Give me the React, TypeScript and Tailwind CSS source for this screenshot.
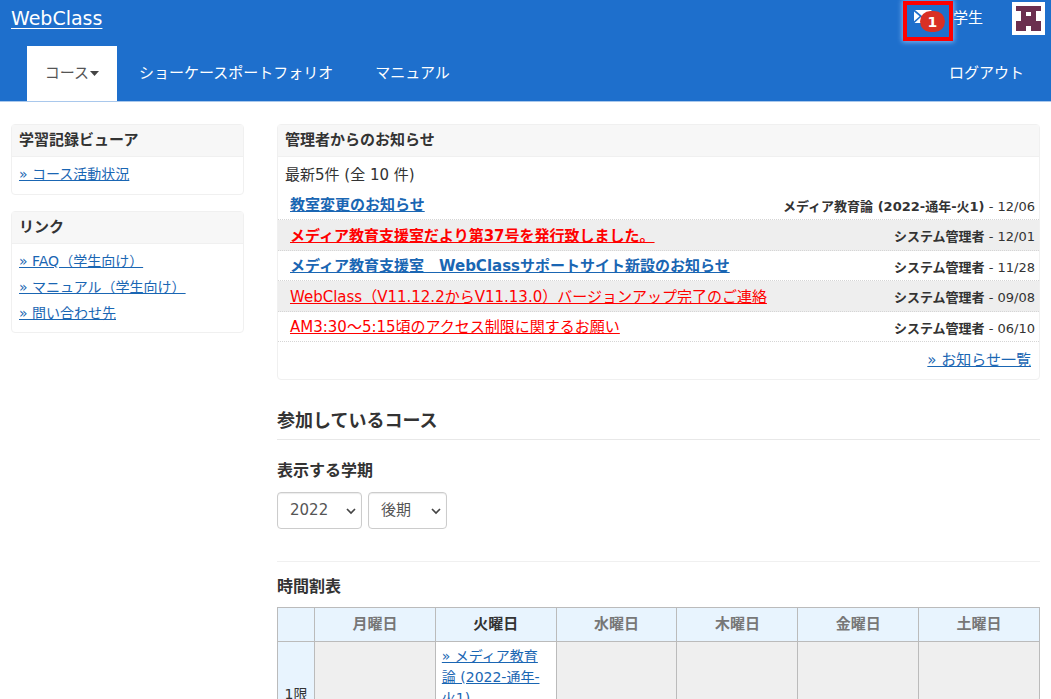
const sideLinks = ["FAQ（学生向け）", "マニュアル（学生向け）", "問い合わせ先"];

const notices = [
  { title: "教室変更のお知らせ", from: "メディア教育論 (2022-通年-火1)", date: "12/06", style: "font-bold text-[#1a66b3]" },
  { title: "メディア教育支援室だより第37号を発行致しました。", from: "システム管理者", date: "12/01", style: "font-bold text-[#ff0000]" },
  { title: "メディア教育支援室　WebClassサポートサイト新設のお知らせ", from: "システム管理者", date: "11/28", style: "font-bold text-[#1a66b3]" },
  { title: "WebClass（V11.12.2からV11.13.0）バージョンアップ完了のご連絡", from: "システム管理者", date: "09/08", style: "text-[#ff0000]" },
  { title: "AM3:30～5:15頃のアクセス制限に関するお願い", from: "システム管理者", date: "06/10", style: "text-[#ff0000]" },
];

const days = ["月曜日", "火曜日", "水曜日", "木曜日", "金曜日", "土曜日"];

function Panel({ title, children }: { title: string; children: React.ReactNode }) {
  return (
    <section className="rounded border border-[#f0f0f0] bg-white">
      <h2 className="flex h-8 items-center border-b border-[#f0f0f0] bg-[#f7f7f7] px-[7px] text-[15px] font-bold">{title}</h2>
      {children}
    </section>
  );
}

function Select({ id, label, options, className }: { id: string; label: string; options: string[]; className: string }) {
  return (
    <div className="relative">
      <label htmlFor={id} className="sr-only">{label}</label>
      <select
        id={id}
        className={`h-[37px] appearance-none rounded border border-[#ccc] bg-white pl-3 text-[15px] text-[#555] shadow-[inset_0_1px_1px_rgba(0,0,0,0.08)] ${className}`}
      >
        {options.map((o) => (
          <option key={o}>{o}</option>
        ))}
      </select>
      <svg className="pointer-events-none absolute top-4 right-1.5" width="10" height="7" viewBox="0 0 10 7" fill="none" stroke="#444" strokeWidth="1.7">
        <path d="M1 1l4 4 4-4" />
      </svg>
    </div>
  );
}

function Header() {
  return (
    <header className="border-b border-[#a9c8ec] bg-[#1e6fcc] text-white">
      <div className="flex h-[46px] items-start justify-between pr-1.5 pl-[11px]">
        <a href="#" className="pt-1.5 text-[19px] leading-6 underline underline-offset-3">WebClass</a>
        <div className="flex items-start">
          <a
            href="#"
            aria-label="メッセージ"
            className="relative mt-px h-10 w-[50px] border-4 border-[#ff0000] shadow-[0_0_5px_1px_rgba(160,200,250,0.8)]"
          >
            <svg className="absolute top-[5px] left-[7px]" width="19" height="13" viewBox="0 0 19 13">
              <path d="M1 0h17l-8.500 7.300zM0 1.500v9.800l5.600-5zM19 1.500v9.800l-5.600-5zM6.700 7.200l2.800 2.200 2.800-2.200L18.500 13H.500z" fill="#fff" />
            </svg>
            <span className="absolute top-1.5 left-[13px] flex h-[21px] w-[25px] items-center justify-center rounded-full bg-[#d93025] text-sm font-bold">1</span>
          </a>
          <span className="pt-1.5 text-[15px] leading-6">学生</span>
          <svg className="mt-0.5 ml-[29px]" width="33" height="33" viewBox="0 0 33 33">
            <rect width="33" height="33" fill="#fff" />
            <path d="M4 4h25v5h-5v10h5v10H19v-5h-5v5H4V19h5V9H4z" fill="#6b2f4f" />
            <rect x="14" y="10" width="5" height="4" fill="#fff" />
          </svg>
        </div>
      </div>
      <nav className="flex h-[55px] items-center pr-[27px] pl-[27px] text-[15px]">
        <button className="flex h-full w-[90px] items-center justify-center gap-px bg-white text-[#555]">
          コース
          <svg width="9" height="5" viewBox="0 0 9 5">
            <path d="M0 0h9L4.500 5z" fill="#444" />
          </svg>
        </button>
        <a href="#" className="ml-[22px]">ショーケースポートフォリオ</a>
        <a href="#" className="ml-[42px]">マニュアル</a>
        <a href="#" className="ml-auto">ログアウト</a>
      </nav>
    </header>
  );
}

export default function App() {
  return (
    <div className="bg-white font-['DejaVu_Sans','Noto_Sans_CJK_JP',sans-serif] text-[#333]" lang="ja">
      <Header />
      <div className="grid grid-cols-[233px_1fr] gap-[33px] px-[11px] pt-[22px]">
        <aside className="flex flex-col gap-4 text-sm">
          <Panel title="学習記録ビューア">
            <div className="px-[7px] pt-1 pb-[7px] leading-[26px] text-[#1a66b3]">
              <a href="#" className="underline">» コース活動状況</a>
            </div>
          </Panel>
          <Panel title="リンク">
            <ul className="px-[7px] pt-1 pb-1.5 leading-[26px] text-[#1a66b3]">
              {sideLinks.map((l) => (
                <li key={l}>
                  <a href="#" className="underline">» {l}</a>
                </li>
              ))}
            </ul>
          </Panel>
        </aside>

        <main className="min-w-0">
          <Panel title="管理者からのお知らせ">
            <p className="px-[7px] pt-1 text-[15px] leading-7">最新5件 (全 10 件)</p>
            <ul className="pt-px">
              {notices.map((n) => (
                <li
                  key={n.title}
                  className="flex items-center justify-between border-b border-dotted border-[#d5d5d5] pr-1 pl-3 odd:h-[30px] even:h-[31px] even:bg-[#eee]"
                >
                  <a href="#" className={`pt-0.5 text-[15px] underline ${n.style}`}>{n.title}</a>
                  <span className="pt-1 text-[13px]">
                    <b>{n.from}</b> - {n.date}
                  </span>
                </li>
              ))}
            </ul>
            <div className="flex h-[37px] items-center justify-end px-2 text-[15px] text-[#1a66b3]">
              <a href="#" className="underline">» お知らせ一覧</a>
            </div>
          </Panel>

          <h1 className="mt-7 border-b border-[#e8e8e8] pb-[5px] text-[18px] leading-[26px] font-bold">参加しているコース</h1>
          <h3 className="mt-[19px] text-base leading-6 font-bold">表示する学期</h3>
          <div className="mt-[9px] flex gap-1.5 border-b border-[#f0f0f0] pb-8">
            <Select id="year" label="年度" options={["2022", "2021"]} className="w-[85px]" />
            <Select id="term" label="学期" options={["後期", "前期"]} className="w-[79px]" />
          </div>

          <h3 className="mt-[13px] text-base leading-6 font-bold">時間割表</h3>
          <table className="mt-2 w-full table-fixed border-collapse text-[15px]">
            <thead>
              <tr className="h-[34px] bg-[#e8f4fe]">
                <th className="w-[37px] border border-[#bbb]" />
                {days.map((d) => (
                  <th key={d} className={`border border-[#bbb] ${d === "火曜日" ? "text-[#333]" : "text-[#777]"}`}>{d}</th>
                ))}
              </tr>
            </thead>
            <tbody>
              <tr className="h-[104px]">
                <th className="border border-[#bbb] bg-[#e8f4fe] p-0 text-sm font-normal">1限</th>
                {days.map((d) => (
                  <td key={d} className={`border border-[#bbb] px-1.5 pt-1 align-top text-sm leading-[21px] ${d === "火曜日" ? "bg-white" : "bg-[#efefef]"}`}>
                    {d === "火曜日" && (
                      <a href="#" className="text-[#1a66b3] underline">» メディア教育論 (2022-通年-火1)</a>
                    )}
                  </td>
                ))}
              </tr>
            </tbody>
          </table>
        </main>
      </div>
    </div>
  );
}
